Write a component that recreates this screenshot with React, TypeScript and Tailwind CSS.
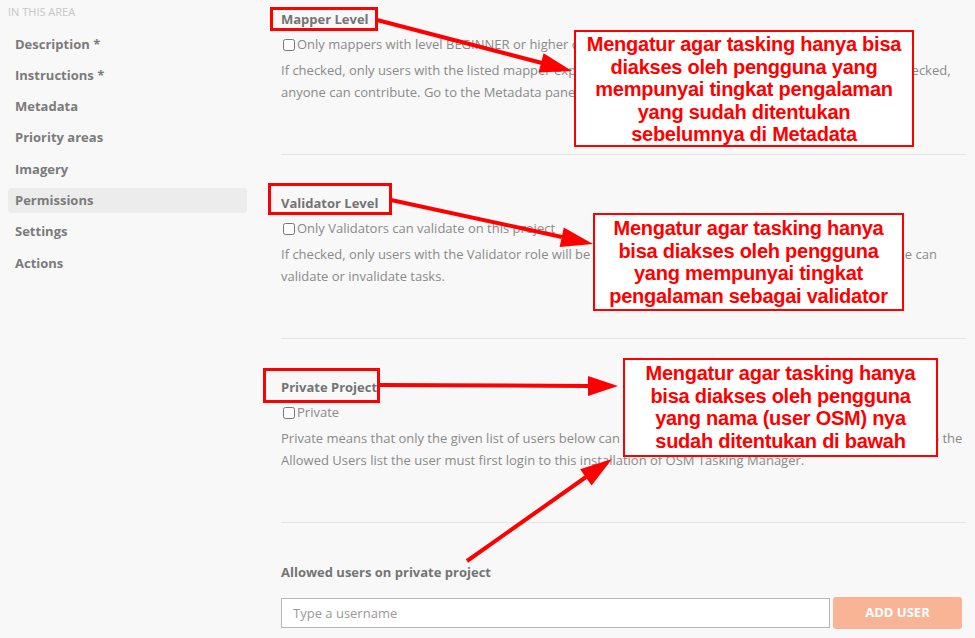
import React from "react";

const navItems = [
  "Description *",
  "Instructions *",
  "Metadata",
  "Priority areas",
  "Imagery",
  "Permissions",
  "Settings",
  "Actions",
];

function Checkbox({ label }: { label: string }) {
  return (
    <label className="flex items-center h-5 text-[13px] text-[#8a8a8a]">
      <input
        type="checkbox"
        className="ml-[2px] mr-[1px] w-[12px] h-[12px] m-0"
      />
      <span className="ml-[1px]">{label}</span>
    </label>
  );
}

function Section({
  title,
  check,
  lines,
  first,
}: {
  title: string;
  check: string;
  lines: string[];
  first?: boolean;
}) {
  return (
    <section
      className={`${first ? "pt-[10px]" : "pt-[39px]"} pb-[51px] border-b border-[#e6e6e6]`}
    >
      <h3 className="h-[18px] leading-[18px] text-[13px] font-bold text-[#747474]">
        {title}
      </h3>
      <div className="mt-[7px]">
        <Checkbox label={check} />
      </div>
      <p className="mt-[4px] text-[13px] leading-[22px] text-[#8a8a8a] whitespace-nowrap overflow-hidden">
        {lines.map((l, i) => (
          <span key={i} className="block">
            {l}
          </span>
        ))}
      </p>
    </section>
  );
}

function Note({
  className,
  lines,
}: {
  className: string;
  lines: string[];
}) {
  return (
    <div
      className={`absolute bg-white border-2 border-[#ff0000] text-[#ff0000] text-center font-bold text-[20px] leading-[22.5px] tracking-[-0.25px] ${className}`}
      style={{ fontFamily: '"Liberation Sans", Arial, sans-serif' }}
    >
      {lines.map((l, i) => (
        <div key={i} className="whitespace-nowrap">
          {l}
        </div>
      ))}
    </div>
  );
}

export default function App() {
  return (
    <div
      className="relative w-[975px] h-[638px] overflow-hidden bg-[#f8f8f8] flex"
      style={{ fontFamily: '"Open Sans", "Noto Sans", sans-serif' }}
    >
      {/* sidebar */}
      <aside className="w-[247px] pl-2 shrink-0">
        <div className="pt-[4px] h-[20px] leading-4 text-[11px] uppercase text-[#c6c6c6]">
          In this area
        </div>
        <ul className="mt-[11.5px] flex flex-col gap-[6.3px]">
          {navItems.map((item) => (
            <li
              key={item}
              className={`h-[25px] leading-[25px] px-[7px] rounded text-[13px] font-bold text-[#7b7b7b] ${
                item === "Permissions" ? "bg-[#ececec]" : ""
              }`}
            >
              {item}
            </li>
          ))}
        </ul>
      </aside>

      {/* main */}
      <main className="ml-[34px] w-[685px]">
        <Section
          first
          title="Mapper Level"
          check="Only mappers with level BEGINNER or higher can map on this project"
          lines={[
            "If checked, only users with the listed mapper experience level, or higher, can map on this project. If unchecked,",
            "anyone can contribute. Go to the Metadata panel to select the required mapper level.",
          ]}
        />
        <Section
          title="Validator Level"
          check="Only Validators can validate on this project"
          lines={[
            "If checked, only users with the Validator role will be able to validate on this project. If unchecked, anyone can",
            "validate or invalidate tasks.",
          ]}
        />
        <Section
          title="Private Project"
          check="Private"
          lines={[
            "Private means that only the given list of users below can access this project. Before a user can be added onto the",
            "Allowed Users list the user must first login to this installation of OSM Tasking Manager.",
          ]}
        />
        <section className="pt-[40px]">
          <h3 className="h-[18px] leading-[18px] text-[13px] font-bold text-[#747474]">
            Allowed users on private project
          </h3>
          <div className="mt-[16px] flex items-center gap-[3px]">
            <input
              type="text"
              placeholder="Type a username"
              className="w-[549px] h-[30px] bg-white border border-[#b5b5b5] px-[11px] text-[13px] text-[#555] placeholder:text-[#999] outline-none"
            />
            <button className="w-[129px] h-[32px] rounded-[3px] bg-[#f9b496] text-white text-[13px] font-bold uppercase">
              Add user
            </button>
          </div>
        </section>
      </main>

      {/* annotations */}
      <Note
        className="left-[574px] top-[30px] w-[340px] h-[117px] pt-[1px]"
        lines={[
          "Mengatur agar tasking hanya bisa",
          "diakses oleh pengguna yang",
          "mempunyai tingkat pengalaman",
          "yang sudah ditentukan",
          "sebelumnya di Metadata",
        ]}
      />
      <Note
        className="left-[593px] top-[213px] w-[311px] h-[98px] pt-[2px]"
        lines={[
          "Mengatur agar tasking hanya",
          "bisa diakses oleh pengguna",
          "yang mempunyai tingkat",
          "pengalaman sebagai validator",
        ]}
      />
      <Note
        className="left-[623px] top-[358px] w-[315px] h-[99px] pt-[2px]"
        lines={[
          "Mengatur agar tasking hanya",
          "bisa diakses oleh pengguna",
          "yang nama (user OSM) nya",
          "sudah ditentukan di bawah",
        ]}
      />

      <svg
        className="absolute inset-0 pointer-events-none"
        width="975"
        height="638"
        viewBox="0 0 975 638"
      >
        <g fill="none" stroke="#ff0000" strokeWidth="3">
          <rect x="271.5" y="8.5" width="105" height="21" />
          <rect x="269.5" y="184.5" width="121" height="29" />
          <rect x="264.5" y="369.5" width="114" height="32" />
        </g>
        <g stroke="#ff0000" strokeWidth="4" strokeLinecap="butt">
          <line x1="377" y1="20" x2="542" y2="63" />
          <line x1="391" y1="200" x2="562" y2="237" />
          <line x1="380" y1="385" x2="589" y2="386" />
          <line x1="467" y1="561" x2="586" y2="477" />
        </g>
        <g fill="#ff0000">
          <polygon points="572,71 538.6,72.6 543.6,53.2" />
          <polygon points="593,244 559.6,247 563.8,227.4" />
          <polygon points="618,386 588,376 588,396" />
          <polygon points="612,459 591.6,485.6 580.1,469.2" />
        </g>
      </svg>
    </div>
  );
}
